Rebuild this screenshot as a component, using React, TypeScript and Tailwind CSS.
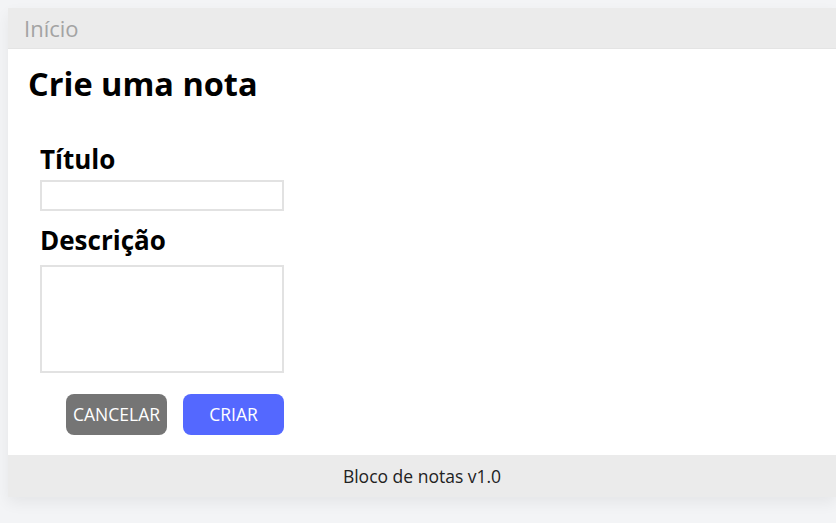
import React from "react";

const font = { fontFamily: '"Open Sans", "Noto Sans", sans-serif' };

export default function App() {
  return (
    <div className="min-h-[523px] w-[836px] overflow-hidden bg-[#f3f4f6] pt-2 pl-2" style={font}>
      <div className="w-[828px] shadow-[0_6px_14px_rgba(0,0,0,0.06)]">
        {/* Header */}
        <div className="h-[41px] bg-[#ebebeb] border-b border-[#e4e4e4] px-4 flex items-center">
          <span className="text-[22px] text-[#a3a3a3]">Início</span>
        </div>

        {/* Content */}
        <div className="bg-white px-5 pt-[13px] pb-5">
          <h1 className="text-[32.5px] font-bold text-black leading-[44px]">Crie uma nota</h1>

          <form className="mt-[36px] ml-3 w-[244px] flex flex-col">
            <label className="text-[26px] font-bold text-black leading-[35px]">Título</label>
            <input className="mt-[3px] h-[31px] w-[244px] border-2 border-[#e2e2e2] outline-none" />
            <label className="mt-[12px] text-[26px] font-bold text-black leading-[35px]">Descrição</label>
            <textarea className="mt-[7px] h-[108px] w-[244px] border-2 border-[#e2e2e2] outline-none resize-none" />
            <div className="mt-[21px] flex justify-end gap-4">
              <button type="button" className="h-[41px] w-[101px] rounded-lg bg-[#757575] text-white text-[17.5px]">
                CANCELAR
              </button>
              <button type="button" className="h-[41px] w-[101px] rounded-lg bg-[#5468ff] text-white text-[17.5px]">
                CRIAR
              </button>
            </div>
          </form>
        </div>

        {/* Footer */}
        <div className="h-[42px] bg-[#ebebeb] flex items-center justify-center">
          <span className="text-[17.5px] text-[#222]">Bloco de notas v1.0</span>
        </div>
      </div>
    </div>
  );
}
